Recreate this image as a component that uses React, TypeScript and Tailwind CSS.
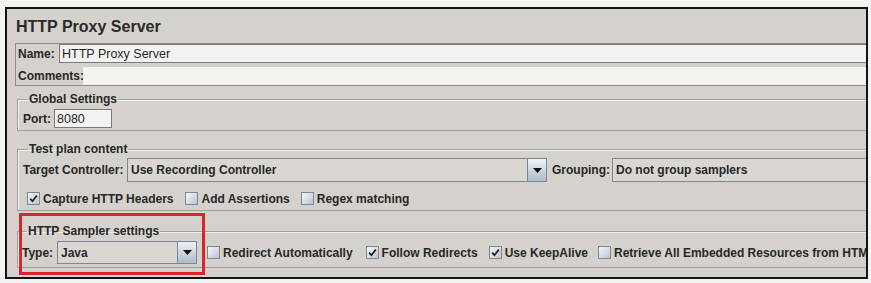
import React from 'react';

const Check = ({ checked }: { checked?: boolean }) => (
  <span className="w-[13px] h-[13px] border border-[#7b8898] bg-gradient-to-br from-[#f6f8fa] to-[#b9c4d1] flex items-center justify-center shrink-0">
    {checked && (
      <svg width="9" height="9" viewBox="0 0 9 9">
        <path d="M1.2 4.6 L3.4 7.2 L7.8 1.6" stroke="#1e1e1e" strokeWidth="1.7" fill="none" />
      </svg>
    )}
  </span>
);

const CheckItem = ({ label, checked, className = '' }: { label: string; checked?: boolean; className?: string }) => (
  <div className={`flex items-center gap-[3px] shrink-0 ${className}`}>
    <Check checked={checked} />
    <span className="whitespace-nowrap">{label}</span>
  </div>
);

const Arrow = () => (
  <div className="w-[19px] h-full border-l border-[#7b8898] bg-gradient-to-b from-[#f0f3f6] to-[#aebbc9] flex items-center justify-center shrink-0">
    <svg width="9" height="5" viewBox="0 0 9 5">
      <path d="M0 0H9L4.5 5Z" fill="#111" />
    </svg>
  </div>
);

const Combo = ({ value, className = '' }: { value: string; className?: string }) => (
  <div className={`flex border border-[#7b8898] bg-[#dad7d3] shrink-0 ${className}`}>
    <div className="flex-1 flex items-center pl-[3px] whitespace-nowrap">{value}</div>
    <Arrow />
  </div>
);

export default function App() {
  return (
    <div className="relative w-[871px] h-[283px] bg-[#f3f3f1] pt-[7px] pl-[5px] font-['Liberation_Sans',Arial,sans-serif] text-[12px] font-bold text-[#272727] leading-[14px]">
      <div className="w-[863px] h-[272px] border-2 border-[#141414] bg-[#d5d1cd] overflow-hidden">
        <div className="w-[1000px]">
          {/* title */}
          <div className="h-[34px] pt-[8px] pl-[9px] text-[16px] leading-[20px] text-[#2a2a2a]">HTTP Proxy Server</div>

          {/* name / comments */}
          <div className="ml-[8px] h-[43px] border-l border-y border-[#8e8c89] pl-[2px]">
            <div className="flex items-center h-[19px]">
              <span className="w-[41px]">Name:</span>
              <div className="flex-1 h-[19px] border border-[#7a7a7a] bg-[#f4f3f1] flex items-center pl-[2px] font-normal text-[12.5px]">
                HTTP Proxy Server
              </div>
            </div>
            <div className="flex items-center h-[18px] mt-[4px]">
              <span className="w-[65px]">Comments:</span>
              <div className="flex-1 h-[18px] bg-[#f4f3f1]" />
            </div>
          </div>

          {/* global settings */}
          <fieldset className="ml-[10px] mt-[6px] w-[980px] border border-[#a3a19e] shadow-[inset_1px_1px_0_#f2f0ee] pl-[5px] pb-[2px]">
            <legend className="ml-[5px] px-[1px] leading-[14px]">Global Settings</legend>
            <div className="flex items-center h-[19px] mt-[3px]">
              <span className="w-[31px]">Port:</span>
              <div className="w-[58px] h-[19px] border border-[#7a7a7a] bg-[#f4f3f1] flex items-center pl-[2px] font-normal text-[12.5px]">8080</div>
            </div>
          </fieldset>

          {/* test plan content */}
          <fieldset className="ml-[10px] mt-[11px] w-[980px] border border-[#a3a19e] shadow-[inset_1px_1px_0_#f2f0ee] pl-[5px] pb-[5px]">
            <legend className="ml-[5px] px-[1px] leading-[14px]">Test plan content</legend>
            <div className="flex items-center h-[24px] mt-[2px]">
              <span className="w-[104px]">Target Controller:</span>
              <Combo value="Use Recording Controller" className="w-[420px] h-[24px]" />
              <span className="w-[60px] ml-[5px]">Grouping:</span>
              <div className="w-[300px] h-[24px] border border-[#7b8898] bg-[#dad7d3] flex items-center pl-[3px]">Do not group samplers</div>
            </div>
            <div className="flex items-center h-[13px] mt-[10px] pl-[4px]">
              <CheckItem label="Capture HTTP Headers" checked />
              <CheckItem label="Add Assertions" className="ml-[12px]" />
              <CheckItem label="Regex matching" className="ml-[11px]" />
            </div>
          </fieldset>

          {/* http sampler settings */}
          <fieldset className="ml-[10px] mt-[13px] w-[980px] border border-[#a3a19e] shadow-[inset_1px_1px_0_#f2f0ee] pl-[4px] pb-[3px]">
            <legend className="ml-[5px] px-[1px] leading-[14px]">HTTP Sampler settings</legend>
            <div className="flex items-center h-[23px] mt-[3px]">
              <span className="w-[35px]">Type:</span>
              <Combo value="Java" className="w-[140px] h-[23px]" />
              <CheckItem label="Redirect Automatically" className="ml-[10px]" />
              <CheckItem label="Follow Redirects" checked className="ml-[13px]" />
              <CheckItem label="Use KeepAlive" checked className="ml-[11px]" />
              <CheckItem label="Retrieve All Embedded Resources from HTML Files" className="ml-[10px]" />
            </div>
          </fieldset>
        </div>
      </div>

      {/* red annotation */}
      <div className="absolute left-[19px] top-[213px] w-[186px] h-[62px] border-[3px] border-[#d5262c]" />
    </div>
  );
}
